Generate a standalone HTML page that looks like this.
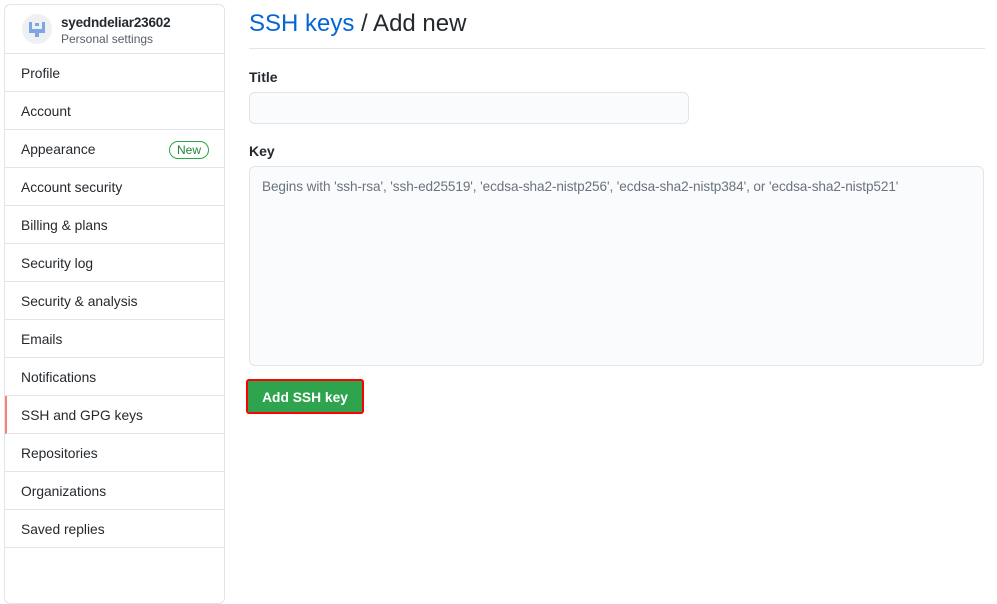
<!DOCTYPE html>
<html><head><style>
*{box-sizing:border-box;margin:0;padding:0}
body{width:997px;height:547px;overflow:hidden;background:#fff;font-family:"Liberation Sans",sans-serif;color:#24292e;font-size:14px;position:relative}
.side{position:absolute;left:4px;top:4px;width:221px;height:600px;border:1px solid #e1e4e8;border-radius:6px}
.hd{height:49px;border-bottom:1px solid #e1e4e8;position:relative}
.av{position:absolute;left:17px;top:9px;width:30px;height:30px;border-radius:50%;background:#eef0f3}
.name{position:absolute;left:56px;top:10px;font-weight:bold;font-size:13.5px;letter-spacing:-0.2px}
.sub{position:absolute;left:56px;top:27px;font-size:12px;color:#586069}
.it{height:38px;border-bottom:1px solid #e1e4e8;padding-left:16px;line-height:39px;position:relative;font-size:13.8px}
.it.sel{border-left:2px solid #f9826c;padding-left:14px}
.new{position:absolute;right:15px;top:11px;border:1px solid #28a745;color:#22863a;border-radius:10px;font-size:12px;line-height:16px;padding:0 7px}
h1{position:absolute;left:249px;top:10px;font-weight:normal;font-size:24px}
h1 span{color:#0366d6}
.line{position:absolute;left:249px;top:48px;width:736px;border-top:1px solid #e1e4e8}
.lbl{position:absolute;left:249px;font-weight:bold;font-size:14px}
.inp{position:absolute;left:249px;top:92px;width:440px;height:32px;border:1px solid #e1e4e8;border-radius:6px;background:#fafbfc}
.ta{position:absolute;left:249px;top:166px;width:735px;height:200px;border:1px solid #e1e4e8;border-radius:6px;background:#fafbfc;padding:12px;color:#6a737d;font-size:13.6px;letter-spacing:-0.1px}
.btn{position:absolute;left:246px;top:379px;width:118px;height:35px;border:2px solid #f00;border-radius:3px;background:#2ea44f;color:#fff;font-weight:bold;text-align:center;line-height:33px;font-size:13.8px}
</style></head><body>
<div class="side">
<div class="hd"><div class="av"><svg width="30" height="30"><rect x="7" y="8" width="3" height="8" fill="#7ea6e0"/><rect x="20" y="8" width="3" height="8" fill="#7ea6e0"/><rect x="7" y="15" width="16" height="4" fill="#7ea6e0"/><rect x="13" y="9" width="4" height="3" fill="#7ea6e0"/><rect x="13" y="18" width="4" height="5" fill="#7ea6e0"/></svg></div><div class="name">syedndeliar23602</div><div class="sub">Personal settings</div></div>
<div class="it">Profile</div>
<div class="it">Account</div>
<div class="it">Appearance<span class="new">New</span></div>
<div class="it">Account security</div>
<div class="it">Billing &amp; plans</div>
<div class="it">Security log</div>
<div class="it">Security &amp; analysis</div>
<div class="it">Emails</div>
<div class="it">Notifications</div>
<div class="it sel">SSH and GPG keys</div>
<div class="it">Repositories</div>
<div class="it">Organizations</div>
<div class="it">Saved replies</div>
</div>
<h1><span>SSH keys</span> / Add new</h1>
<div class="line"></div>
<div class="lbl" style="top:69px">Title</div>
<div class="inp"></div>
<div class="lbl" style="top:143px">Key</div>
<div class="ta">Begins with 'ssh-rsa', 'ssh-ed25519', 'ecdsa-sha2-nistp256', 'ecdsa-sha2-nistp384', or 'ecdsa-sha2-nistp521'</div>
<div class="btn">Add SSH key</div>
</body></html>
